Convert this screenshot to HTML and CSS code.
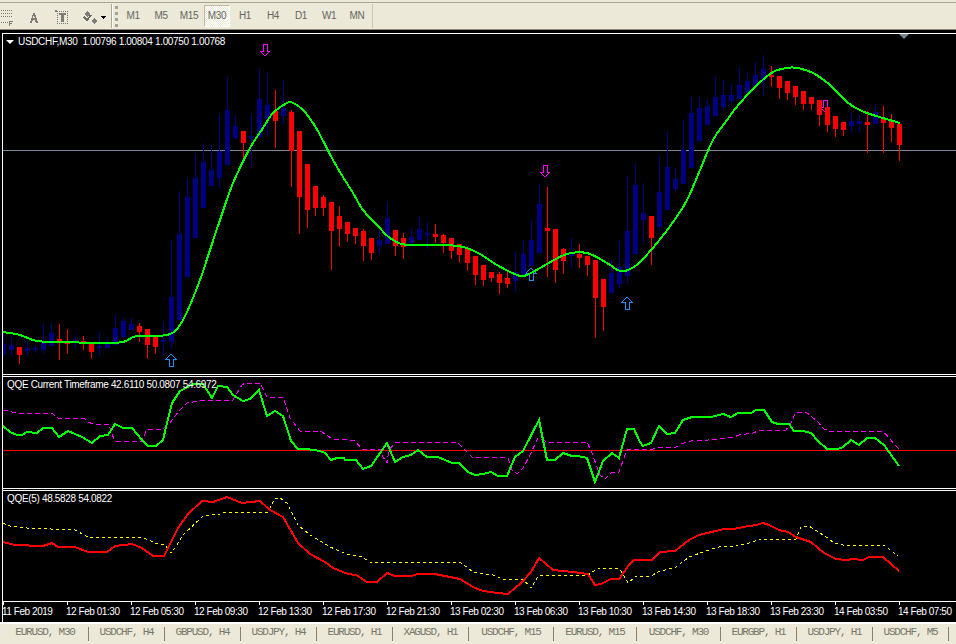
FILE: index.html
```html
<!DOCTYPE html>
<html lang="en">
<head>
  <meta charset="UTF-8">
  <title>USDCHF,M30</title>
  <link rel="stylesheet" href="styles.css">
</head>
<body>
  <div class="topline"></div>
  <div class="toolbar">
    <svg class="tool-icons" width="111" height="26" viewBox="0 0 111 26" shape-rendering="crispEdges">
      <path class="dots" d="M1 7h12M1 10h12M1 13h12M1 19h7"/>
      <path class="ink" d="M9 18h4v1h-3v1h2v1h-2v2h-1z"/>
      <path class="ink" d="M30 20l3-10h2l3 10h-2l-1-3h-2l-1 3zM33 15h2l-1-3z"/>
      <path class="dots" d="M57 8h11M57 20h11M57 8v12M67 8v12"/>
      <path class="ink" d="M55 7h2v2h-2z"/>
      <path class="ink" d="M59 10h7v2h-2v7h-3v-7h-2z"/>
      <path class="ink" d="M87 8l3 3-3 3-3-3zM94 15l3 3-3 3-3-3z"/>
      <path class="ink-line" d="M84 14l3 3 4-5"/>
      <path class="black" d="M100 13h6l-3 3z"/>
    </svg>
    <div class="tool-sep"></div>
    <div class="grip"></div>
    <div class="periods">
      <span class="period">M1</span>
      <span class="period">M5</span>
      <span class="period">M15</span>
      <span class="period active">M30</span>
      <span class="period">H1</span>
      <span class="period">H4</span>
      <span class="period">D1</span>
      <span class="period">W1</span>
      <span class="period">MN</span>
    </div>
  </div>
  <div class="workspace">
    <div class="pane pane-main">
      <svg id="mainChart" width="953" height="340" viewBox="3 34 953 340" shape-rendering="crispEdges"></svg>
      <div class="caption"><span class="caret"></span>USDCHF,M30&nbsp; 1.00796 1.00804 1.00750 1.00768</div>
      <span class="shift"></span>
    </div>
    <div class="pane pane-qqe">
      <svg id="qqeCurrent" width="953" height="111" viewBox="3 377 953 111" shape-rendering="crispEdges"></svg>
      <div class="caption">QQE Current Timeframe 42.6110 50.0807 54.6972</div>
    </div>
    <div class="pane pane-qqe5">
      <svg id="qqeFive" width="953" height="110" viewBox="3 491 953 110" shape-rendering="crispEdges"></svg>
      <div class="caption">QQE(5) 48.5828 54.0822</div>
    </div>
    <div class="axis">
      <span class="stamp">11 Feb 2019</span>
      <span class="stamp">12 Feb 01:30</span>
      <span class="stamp">12 Feb 05:30</span>
      <span class="stamp">12 Feb 09:30</span>
      <span class="stamp">12 Feb 13:30</span>
      <span class="stamp">12 Feb 17:30</span>
      <span class="stamp">12 Feb 21:30</span>
      <span class="stamp">13 Feb 02:30</span>
      <span class="stamp">13 Feb 06:30</span>
      <span class="stamp">13 Feb 10:30</span>
      <span class="stamp">13 Feb 14:30</span>
      <span class="stamp">13 Feb 18:30</span>
      <span class="stamp">13 Feb 23:30</span>
      <span class="stamp">14 Feb 03:50</span>
      <span class="stamp">14 Feb 07:50</span>
    </div>
  </div>
  <div class="tabs">
    <span class="tab tab-first">EURUSD, M30</span>
    <span class="tab">USDCHF, H4</span>
    <span class="tab">GBPUSD, H4</span>
    <span class="tab">USDJPY, H4</span>
    <span class="tab">EURUSD, H1</span>
    <span class="tab">XAGUSD, H1</span>
    <span class="tab">USDCHF, M15</span>
    <span class="tab">EURUSD, M15</span>
    <span class="tab">USDCHF, M30</span>
    <span class="tab">EURGBP, H1</span>
    <span class="tab">USDJPY, H1</span>
    <span class="tab">USDCHF, M5</span>
  </div>
  <script src="chart.js"></script>
</body>
</html>
```
FILE: styles.css
```css
* {
  margin: 0;
  padding: 0;
  box-sizing: border-box;
}
html, body {
  height: 100%;
  overflow: hidden;
}
body {
  width: 956px;
  height: 644px;
  display: flex;
  flex-direction: column;
  background-color: #000;
  font-family: "Liberation Sans", Arial, sans-serif;
}
.topline {
  flex: none;
  height: 3px;
  background-color: #ece9d8;
  border-bottom: 1px solid #a9a68f;
}
.toolbar {
  flex: none;
  height: 27px;
  display: flex;
  align-items: center;
  background-color: #ece9d8;
  border-bottom: 1px solid #8f8c7c;
}
.tool-icons {
  flex: none;
}
.tool-icons .dots {
  fill: none;
  stroke: #77776f;
  stroke-dasharray: 1 1;
}
.tool-icons .ink {
  fill: #7d7d76;
}
.tool-icons .ink-line {
  fill: none;
  stroke: #6b6b66;
  stroke-width: 2;
}
.tool-icons .black {
  fill: #000;
}
.tool-sep {
  width: 2px;
  height: 24px;
  border-left: 1px solid #aca899;
  border-right: 1px solid #fff;
}
.grip {
  width: 3px;
  height: 21px;
  margin-left: 2px;
  border-left: 3px dotted #a4a18f;
}
.periods {
  display: flex;
  align-items: center;
  margin-left: 1px;
  padding-right: 1px;
  border-right: 1px solid #c9c6b4;
  height: 24px;
}
.period {
  width: 28px;
  height: 22px;
  line-height: 22px;
  text-align: center;
  font-size: 10px;
  letter-spacing: -0.4px;
  color: #666660;
}
.period.active {
  width: 26px;
  margin: 0 1px;
  background-color: #ece9d8;
  background-image: repeating-conic-gradient(#fff 0 25%, #ece9d8 0 50%);
  background-size: 2px 2px;
  border: 1px solid #fff;
  border-color: #bdbaa6 #fff #fff #bdbaa6;
  line-height: 20px;
}
.workspace {
  flex: none;
  height: 589px;
  margin-top: 3px;
  margin-left: 2px;
  border-left: 1px solid #fff;
  display: flex;
  flex-direction: column;
}
.pane {
  position: relative;
  border-top: 1px solid #fff;
  flex: none;
}
.pane svg {
  display: block;
}
.pane-main {
  height: 342px;
  border-bottom: 1px solid #fff;
}
.pane-qqe {
  height: 113px;
  margin-top: 1px;
  border-bottom: 1px solid #fff;
}
.pane-qqe5 {
  height: 111px;
  margin-top: 1px;
}
.caption {
  position: absolute;
  top: 1px;
  left: 4px;
  font-size: 10px;
  letter-spacing: -0.33px;
  line-height: 14px;
  color: #fff;
  white-space: pre;
}
.caret {
  display: inline-block;
  width: 0;
  height: 0;
  margin: 0 4px 1px -1px;
  border-left: 4px solid transparent;
  border-right: 4px solid transparent;
  border-top: 4px solid #fff;
}
.shift {
  position: absolute;
  top: 0;
  right: 47px;
  width: 0;
  height: 0;
  border-left: 5px solid transparent;
  border-right: 5px solid transparent;
  border-top: 5px solid #778899;
}
.axis {
  height: 21px;
  display: grid;
  grid-template-columns: repeat(15, 64px);
  border-top: 1px solid #fff;
}
.stamp {
  position: relative;
  margin-left: -1px;
  padding-top: 3px;
  font-size: 10px;
  letter-spacing: -0.45px;
  line-height: 14px;
  color: #fff;
  white-space: nowrap;
}
.stamp::before {
  content: "";
  position: absolute;
  left: 1px;
  top: 0;
  width: 1px;
  height: 3px;
  background-color: #fff;
}
.tabs {
  flex: none;
  height: 22px;
  display: grid;
  grid-template-columns: 89px 76px 76px 76px 76px 76px 85px 83px 84px 76px 76px 76px;
  align-items: center;
  background-color: #ece9d8;
  border-top: 2px solid #fff;
}
.tab {
  height: 14px;
  line-height: 11px;
  text-align: center;
  font-family: "Liberation Mono", monospace;
  font-size: 11px;
  letter-spacing: -1.2px;
  color: #77776a;
  border-right: 1px solid #85816f;
}
.tab-first {
  padding-left: 2px;
}
```
FILE: chart.js
```js
const RED = '#ff0000';
const BLUE = '#000080';
const MAGENTA = '#ff00ff';
const DODGER = '#1e90ff';

// b = bull, r = bear : high, body top, body bottom, low (pixel rows)
const candles = [
  ['b',332,344,354,357],['b',337,345,350,356],['r',347,347,355,364],['b',341,348,351,356],
  ['b',345,348,350,353],['b',323,341,350,354],['b',323,333,346,346],['r',324,339,343,360],
  ['r',329,341,344,354],['b',335,340,343,349],['r',336,341,344,350],['r',342,342,352,359],
  ['b',332,346,348,356],['b',339,342,348,348],['b',315,328,345,345],['b',318,321,337,337],
  ['b',318,324,330,330],['r',323,326,332,342],['r',329,329,345,359],['r',337,337,347,354],
  ['b',322,340,342,355],['b',241,297,342,348],['b',191,234,320,320],['b',178,197,277,277],
  ['b',154,178,238,238],['b',143,162,208,208],['b',145,170,186,186],['b',114,151,178,188],
  ['b',77,110,165,165],['b',115,126,138,139],['r',131,131,143,160],['b',114,136,137,167],
  ['b',69,99,137,137],['b',73,105,119,135],['r',90,111,121,148],['b',80,108,116,124],
  ['r',110,112,151,187],['r',131,131,197,234],['r',164,164,210,228],['r',186,186,208,216],
  ['r',195,197,208,216],['r',202,202,231,270],['r',206,216,229,247],['r',222,222,234,242],
  ['r',228,228,236,244],['r',229,231,246,261],['r',238,238,253,260],['b',230,240,246,254],
  ['b',202,218,244,244],['r',230,230,246,256],['r',233,238,247,259],['b',229,237,243,244],
  ['b',217,229,240,241],['b',222,233,235,249],['r',224,234,237,243],['r',234,235,243,253],
  ['r',238,238,251,259],['r',244,244,255,263],['r',248,249,263,271],['r',256,256,275,285],
  ['r',265,265,280,286],['r',272,272,278,282],['r',272,274,283,294],['r',272,278,284,288],
  ['b',252,272,281,292],['b',241,254,277,277],['b',221,240,266,266],['b',183,204,253,253],
  ['r',187,228,231,277],['r',229,229,270,283],['r',248,249,261,274],['b',238,254,255,267],
  ['r',244,254,258,268],['r',256,256,265,276],['r',260,260,298,338],['r',279,279,307,331],
  ['b',260,273,293,293],['b',241,267,284,288],['b',176,231,276,283],['b',163,185,254,254],
  ['b',183,213,220,243],['r',216,216,238,265],['b',156,192,227,231],['b',131,167,210,210],
  ['b',168,179,189,192],['b',119,150,184,184],['b',97,113,168,168],['b',97,108,141,141],
  ['b',99,106,125,125],['b',77,97,116,116],['b',80,95,107,111],['b',85,95,101,105],
  ['b',67,85,99,99],['b',73,81,93,93],['b',62,75,87,87],['b',55,69,81,96],
  ['r',66,75,77,87],['r',76,76,88,99],['r',81,81,93,100],['r',86,86,97,105],
  ['r',91,91,104,110],['r',97,97,104,110],['r',100,100,115,126],['r',107,107,125,132],
  ['r',116,116,129,137],['r',122,122,130,136],['b',112,121,126,131],['b',115,121,124,132],
  ['r',111,122,125,153],['b',105,112,124,124],['r',106,118,123,153],['r',114,120,128,142],
  ['r',124,124,145,161]
];

const maLine = '3,332 20,335 37,341 63,342 100,343 123,342 137,336 167,335 180,325 190,305 200,280 210,250 220,220 233,183 250,148 263,128 273,113 287,103 293,103 303,110 313,123 320,135 333,160 343,177 353,193 363,210 377,225 390,238 407,245 443,245 463,247 480,254 497,265 517,275 527,275 547,264 567,254 587,253 607,263 620,271 630,269 640,262 657,243 673,222 687,200 700,170 713,140 727,120 740,103 757,85 773,72 787,68 797,68 813,73 830,85 847,102 860,110 873,115 900,123';

const qqeGreen = '3,426 10,432 17,435 22,435 27,432 37,433 43,428 52,428 59,437 68,431 82,437 92,443 100,436 108,435 115,424 123,428 132,428 142,440 148,446 156,446 163,440 167,423 172,403 180,391 193,384 203,384 212,398 218,386 227,387 233,395 243,401 250,399 259,390 267,416 275,411 283,416 291,441 298,449 307,449 320,451 325,453 331,460 337,458 344,458 345,460 356,460 363,469 371,466 378,456 387,443 395,462 403,457 411,455 418,450 427,457 438,457 452,463 459,463 468,472 475,475 483,474 491,472 498,476 507,476 515,457 523,451 539,420 547,460 555,460 563,453 572,456 578,456 587,458 595,482 603,461 612,453 619,458 627,429 634,429 640,442 643,446 651,443 659,426 667,434 675,433 683,420 692,417 711,417 723,414 731,417 738,413 751,413 756,410 764,410 772,422 778,424 789,424 794,431 803,431 811,433 818,441 827,449 838,449 843,447 851,440 859,445 867,438 875,438 884,445 899,466';

const qqeMagenta = '3,410 17,413 53,414 58,418 85,419 88,422 93,424 109,424 111,432 115,441 142,441 147,429 163,429 170,423 178,412 187,403 200,401 233,400 242,385 245,383 260,383 267,397 283,397 290,418 300,431 320,431 327,435 332,439 345,439 355,441 362,449 380,449 383,457 387,463 389,450 396,442 457,442 465,450 472,457 508,458 512,470 517,474 523,468 530,455 538,438 547,442 587,442 592,453 597,467 600,475 605,479 612,472 619,472 625,455 628,449 653,449 656,448 676,447 681,444 691,441 708,440 734,437 739,435 753,433 758,431 786,430 791,423 796,412 806,412 818,422 824,429 829,431 883,431 889,438 899,449';

const fiveRed = '3,542 15,545 43,546 52,543 58,547 75,547 88,552 107,552 115,546 132,544 142,548 153,556 164,556 178,528 188,514 202,501 213,502 227,497 242,503 260,501 270,510 283,517 298,543 310,554 325,562 333,568 348,574 356,575 367,582 377,582 387,573 395,576 412,576 417,574 435,574 460,579 473,587 480,590 489,592 508,594 521,583 531,572 539,558 553,570 573,572 588,574 595,585 601,584 611,579 619,579 629,565 634,560 652,560 660,552 675,551 689,540 699,535 724,529 734,529 743,527 756,525 763,523 769,525 779,530 788,532 796,537 811,542 824,553 836,559 846,560 853,559 863,560 869,557 883,557 899,571';

const fiveYellow = '3,523 10,526 27,528 75,530 88,537 142,537 155,543 165,545 171,553 175,548 183,535 203,516 220,514 227,512 268,512 275,498 280,498 287,503 298,525 310,535 330,547 347,554 362,557 370,562 460,562 473,572 493,575 503,579 523,579 531,588 539,575 588,575 598,568 619,568 628,583 636,576 651,576 658,572 676,567 689,557 709,550 719,547 736,546 753,542 759,539 796,539 801,527 809,526 826,537 834,543 843,545 884,545 898,556';

const NS = 'http://www.w3.org/2000/svg';

function add(svg, tag, attrs) {
  const el = document.createElementNS(NS, tag);
  for (const key in attrs) {
    el.setAttribute(key, attrs[key]);
  }
  svg.appendChild(el);
  return el;
}

function line(svg, points, color, width, dash) {
  const attrs = { points: points, fill: 'none', stroke: color, 'stroke-width': width };
  if (dash) {
    attrs['stroke-dasharray'] = dash;
  }
  add(svg, 'polyline', attrs);
}

// catmull-rom through the read points, the moving average is a smooth curve
function smooth(points) {
  const p = points.split(' ').map((s) => s.split(',').map(Number));
  const out = [];
  for (let i = 0; i < p.length - 1; i++) {
    const a = p[Math.max(i - 1, 0)], b = p[i], c = p[i + 1], d = p[Math.min(i + 2, p.length - 1)];
    for (let t = 0; t < 1; t += 0.25) {
      const x = 0.5 * (2 * b[0] + (c[0] - a[0]) * t + (2 * a[0] - 5 * b[0] + 4 * c[0] - d[0]) * t * t + (3 * b[0] - a[0] - 3 * c[0] + d[0]) * t * t * t);
      const y = 0.5 * (2 * b[1] + (c[1] - a[1]) * t + (2 * a[1] - 5 * b[1] + 4 * c[1] - d[1]) * t * t + (3 * b[1] - a[1] - 3 * c[1] + d[1]) * t * t * t);
      out.push(x.toFixed(1) + ',' + y.toFixed(1));
    }
  }
  out.push(p[p.length - 1].join(','));
  return out.join(' ');
}

// hollow block arrow, y is the tip
function arrow(svg, x, y, color, down) {
  const d = down ? -1 : 1;
  const pts = [[0,0],[5,5*d],[2,5*d],[2,12*d],[-2,12*d],[-2,5*d],[-5,5*d]];
  add(svg, 'polygon', {
    points: pts.map((p) => (x + p[0]) + ',' + (y + p[1])).join(' '),
    fill: 'none',
    stroke: color,
    'stroke-width': 1
  });
}

const main = document.getElementById('mainChart');
add(main, 'rect', { x: 3, y: 150, width: 953, height: 1, fill: '#778899' });

arrow(main, 171, 354, DODGER, false);
arrow(main, 627, 297, DODGER, false);
arrow(main, 531, 268, DODGER, false);
arrow(main, 265, 56, MAGENTA, true);
arrow(main, 545, 177, MAGENTA, true);
arrow(main, 825, 112, MAGENTA, true);

candles.forEach((c, i) => {
  const x = 3 + i * 8;
  const color = c[0] === 'b' ? BLUE : RED;
  add(main, 'rect', { x: x, y: c[1], width: 1, height: c[4] - c[1], fill: color });
  add(main, 'rect', { x: x - 2, y: c[2], width: 5, height: Math.max(c[3] - c[2], 2), fill: color });
});

line(main, smooth(maLine), '#00ff00', 2);

const qqe = document.getElementById('qqeCurrent');
add(qqe, 'rect', { x: 3, y: 450, width: 953, height: 1, fill: RED });
line(qqe, qqeMagenta, MAGENTA, 1, '5 3');
line(qqe, qqeGreen, '#00ff00', 2);

const five = document.getElementById('qqeFive');
line(five, fiveYellow, '#ffff00', 1, '3 3');
line(five, fiveRed, RED, 2);
```
